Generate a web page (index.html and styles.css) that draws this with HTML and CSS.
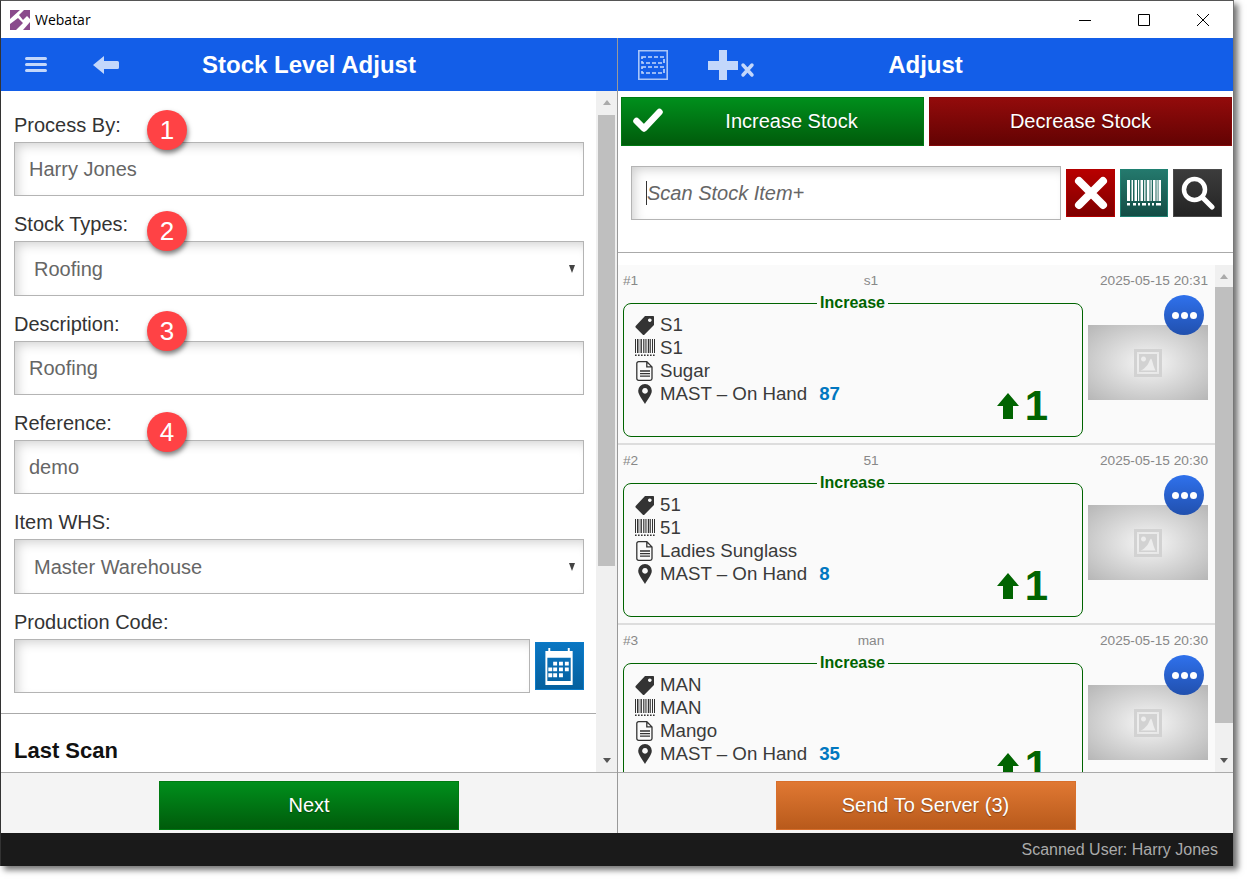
FILE: index.html
```html
<!DOCTYPE html>
<html lang="en">
<head>
<meta charset="utf-8">
<title>Webatar</title>
<link rel="stylesheet" href="styles.css">
</head>
<body>
<svg class="defs" aria-hidden="true">
  <symbol id="i-tag" viewBox="0 0 20 20"><path fill-rule="evenodd" d="M10 1h8.200a.8.8 0 0 1 .8.8V10L9.600 19.400a1.400 1.400 0 0 1-2 0L.9 12.700a1.400 1.400 0 0 1 0-2zM14.800 3.400a1.800 1.800 0 1 0 .01 0z"/></symbol>
  <symbol id="i-bars" viewBox="0 0 20 18"><path d="M0 0h1v14H0zM2 0h1v14H2zM3.500 0h.8v14h-.8zM5.500 0h1.400v14H5.500zM8 0h.8v14H8zM9.600 0h1v14h-1zM11.500 0h.7v14h-.7zM13 0h1.400v14H13zM15.200 0h.8v14h-.8zM17 0h1v14h-1zM19 0h1v14h-1zM0 15.600h1.600v1.400H0zM3 15.600h1.600v1.400H3zM6 15.600h1.600v1.400H6zM9 15.600h1.600v1.400H9zM12 15.600h1.600v1.400H12zM15 15.600h1.600v1.400H15zM18 15.600h1.600v1.400H18z"/></symbol>
  <symbol id="i-doc" viewBox="0 0 18 20"><path fill="none" stroke="currentColor" stroke-width="1.300" d="M2.600.7h8.200l5.200 5.200v11.600a1.800 1.800 0 0 1-1.800 1.800H2.600A1.800 1.800 0 0 1 .8 17.500V2.500A1.800 1.800 0 0 1 2.600.7zM10.800.7v5.200H16M4 10h10M4 12.600h10M4 15.200h10"/></symbol>
  <symbol id="i-pin" viewBox="0 0 14 20"><path fill-rule="evenodd" d="M7 0a6.800 6.800 0 0 1 6.800 6.800C13.800 11 9 16.500 7 20 5 16.500.2 11 .2 6.800A6.800 6.800 0 0 1 7 0zm0 4a2.900 2.900 0 1 0 .01 0z"/></symbol>
  <symbol id="i-up" viewBox="0 0 22 26"><path d="M11 0l11 13h-6v13H6V13H0z"/></symbol>
  <symbol id="i-photo" viewBox="0 0 28 28"><path fill-rule="evenodd" d="M0 0h28v28H0zM3 3v22h22V3zM5 5h18v18H5zm4.500 2.500a2.500 2.500 0 1 0 .01 0zM6.500 21.500c3-.5 4.500-3 6.500-5 1.500-1.500 2.500-5.500 4-7 1.500 1.500 2 7 4.500 12z"/></symbol>
</svg>

<div class="window">
  <div class="titlebar">
    <svg class="logo" viewBox="0 0 20 20" aria-hidden="true">
      <path fill="#8a4a8c" d="M0 0h10L0 9zM9 5l5-5h6v9l-3-3-4 4zM0 14l8-6 5 5-7 7H0zM20 12v8h-7z"/>
    </svg>
    <span class="app-name">Webatar</span>
    <div class="win-controls">
      <svg viewBox="0 0 59 37" class="win-btn" aria-hidden="true"><path d="M24 19.500h12" stroke="#000" fill="none"/></svg>
      <svg viewBox="0 0 59 37" class="win-btn" aria-hidden="true"><path d="M24.500 13.500h11v11h-11z" stroke="#000" fill="none"/></svg>
      <svg viewBox="0 0 59 37" class="win-btn" aria-hidden="true"><path d="M24 13l12 12M36 13L24 25" stroke="#000" fill="none"/></svg>
    </div>
  </div>

  <div class="panes">
    <section class="pane pane-left">
      <header class="appbar">
        <div class="appbar-icons icons-left">
          <svg class="ic-menu" viewBox="0 0 22 15" aria-hidden="true"><path d="M1.500 1.500h19M1.500 7.500h19M1.500 13.500h19" stroke="#c3d7fb" stroke-width="3" stroke-linecap="round"/></svg>
          <svg class="ic-back" viewBox="0 0 26 18" aria-hidden="true"><path fill="#c3d7fb" d="M0 9L11 0v5h13.500a1.500 1.500 0 0 1 1.500 1.500v5a1.500 1.500 0 0 1-1.500 1.500H11v5z"/></svg>
        </div>
        <h1 class="appbar-title">Stock Level Adjust</h1>
        <div></div>
      </header>
      <div class="scroll-wrap">
        <div class="form">
          <div class="field">
            <label class="label">Process By:</label>
            <div class="input">Harry Jones</div>
            <span class="badge">1</span>
          </div>
          <div class="field">
            <label class="label">Stock Types:</label>
            <div class="input select">Roofing<span class="caret-down"></span></div>
            <span class="badge badge-low">2</span>
          </div>
          <div class="field">
            <label class="label">Description:</label>
            <div class="input">Roofing</div>
            <span class="badge badge-low">3</span>
          </div>
          <div class="field">
            <label class="label">Reference:</label>
            <div class="input">demo</div>
            <span class="badge badge-lower">4</span>
          </div>
          <div class="field">
            <label class="label">Item WHS:</label>
            <div class="input select">Master Warehouse<span class="caret-down"></span></div>
          </div>
          <div class="field">
            <label class="label">Production Code:</label>
            <div class="input-row">
              <div class="input grow"></div>
              <button class="tool tool-blue" type="button" aria-label="Calendar">
                <svg class="ic-cal" viewBox="0 0 32 38" aria-hidden="true"><path fill="#fff" fill-rule="evenodd" d="M2 3h3V0h2v3h18V0h2v3h3v35H2zM4 10v24h24V10z" transform="translate(-1 0)"/><path fill="#fff" d="M9 14h4v4H9zM15 14h4v4h-4zM21 14h4v4h-4zM4 20h4v4H4zM9 20h4v4H9zM15 20h4v4h-4zM21 20h4v4h-4zM4 26h4v4H4zM9 26h4v4H9zM15 26h4v4h-4z"/></svg>
              </button>
            </div>
          </div>
          <hr class="rule">
          <h2 class="last-scan">Last Scan</h2>
        </div>
        <div class="scrollbar scrollbar-left">
          <span class="arrow arrow-up"></span>
          <span class="thumb thumb-left"></span>
          <span class="arrow arrow-down"></span>
        </div>
      </div>
      <footer class="footer">
        <button class="btn btn-green btn-wide" type="button">Next</button>
      </footer>
    </section>

    <section class="pane pane-right">
      <header class="appbar">
        <div class="appbar-icons icons-right">
          <svg class="ic-batch" viewBox="0 0 30 30" aria-hidden="true">
            <path fill="none" stroke="#c3d7fb" stroke-width="1.600" opacity=".85" d="M.8.8h28.400v28.400H.8z"/>
            <path fill="none" stroke="#c3d7fb" stroke-width="1.600" stroke-dasharray="4 2" d="M4 7h22v6H4zM4 17h22v6H4z"/>
          </svg>
          <svg class="ic-addx" viewBox="0 0 47 30" aria-hidden="true">
            <path fill="#c3d7fb" d="M11 0h8v11h11v9H19v10h-8V20H0v-9h11z"/>
            <path stroke="#c3d7fb" stroke-width="3.500" stroke-linecap="round" d="M35 15l9 10M44 15l-9 10"/>
          </svg>
        </div>
        <h1 class="appbar-title">Adjust</h1>
        <div></div>
      </header>

      <div class="actions">
        <button class="btn btn-green btn-action btn-check" type="button">
          <svg class="ic-check" viewBox="0 0 30 24" aria-hidden="true"><path fill="none" stroke="#fff" stroke-width="6.500" stroke-linecap="round" stroke-linejoin="round" d="M3.500 13l7.500 7.500L26.500 4"/></svg>
          Increase Stock
        </button>
        <button class="btn btn-red btn-action" type="button">Decrease Stock</button>
      </div>

      <div class="search">
        <div class="input grow scan"><span class="scan-text">Scan Stock Item+</span></div>
        <button class="tool tool-red" type="button" aria-label="Clear">
          <svg viewBox="0 0 34 34" class="ic-tool" aria-hidden="true"><path stroke="#fff" stroke-width="8" stroke-linecap="round" d="M5 5l24 24M29 5L5 29"/></svg>
        </button>
        <button class="tool tool-teal" type="button" aria-label="Scan barcode">
          <svg viewBox="0 0 34 26" class="ic-scan" aria-hidden="true"><path fill="#fff" d="M0 0h3v21H0zM4.500 0H6v21H4.500zM7.500 0H10v21H7.500zM11 0h1.200v21H11zM13.500 0H16v21h-2.500zM17.200 0h1.300v21h-1.300zM19.800 0h2.700v21h-2.700zM23.500 0h1.200v21h-1.200zM26 0h2.500v21H26zM29.500 0h1.200v21h-1.200zM31.500 0H34v21h-2.500zM0 23h3v2.500H0zM6 23h3v2.500H6zM11 23h2v2.500h-2zM15 23h4v2.500h-4zM21 23h2v2.500h-2zM25 23h2v2.500h-2zM29 23h5v2.500h-5z"/></svg>
        </button>
        <button class="tool tool-dark" type="button" aria-label="Search">
          <svg viewBox="0 0 34 34" class="ic-tool" aria-hidden="true"><circle cx="13.500" cy="13.500" r="10.500" fill="none" stroke="#fff" stroke-width="4.500"/><path stroke="#fff" stroke-width="5" stroke-linecap="round" d="M21.500 21.500L31 31"/></svg>
        </button>
      </div>

      <div class="list-wrap">
        <div class="list">
          <article class="row">
            <div class="meta"><span>#1</span><span class="meta-code">s1</span><span>2025-05-15 20:31</span></div>
            <div class="row-main">
              <fieldset class="card">
                <legend class="card-legend">Increase</legend>
                <div class="card-lines">
                  <div class="line"><svg class="ic-line"><use href="#i-tag"/></svg>S1</div>
                  <div class="line"><svg class="ic-line ic-thin"><use href="#i-bars"/></svg>S1</div>
                  <div class="line"><svg class="ic-line"><use href="#i-doc"/></svg>Sugar</div>
                  <div class="line"><svg class="ic-line"><use href="#i-pin"/></svg>MAST – On Hand<b class="onhand">87</b></div>
                </div>
                <div class="qty"><svg class="ic-up"><use href="#i-up"/></svg><b>1</b></div>
              </fieldset>
              <div class="thumb-col">
                <div class="photo"><svg class="ic-photo"><use href="#i-photo"/></svg></div>
                <button class="dots" type="button" aria-label="More"><i></i><i></i><i></i></button>
              </div>
            </div>
          </article>
          <article class="row">
            <div class="meta"><span>#2</span><span class="meta-code">51</span><span>2025-05-15 20:30</span></div>
            <div class="row-main">
              <fieldset class="card">
                <legend class="card-legend">Increase</legend>
                <div class="card-lines">
                  <div class="line"><svg class="ic-line"><use href="#i-tag"/></svg>51</div>
                  <div class="line"><svg class="ic-line ic-thin"><use href="#i-bars"/></svg>51</div>
                  <div class="line"><svg class="ic-line"><use href="#i-doc"/></svg>Ladies Sunglass</div>
                  <div class="line"><svg class="ic-line"><use href="#i-pin"/></svg>MAST – On Hand<b class="onhand">8</b></div>
                </div>
                <div class="qty"><svg class="ic-up"><use href="#i-up"/></svg><b>1</b></div>
              </fieldset>
              <div class="thumb-col">
                <div class="photo"><svg class="ic-photo"><use href="#i-photo"/></svg></div>
                <button class="dots" type="button" aria-label="More"><i></i><i></i><i></i></button>
              </div>
            </div>
          </article>
          <article class="row">
            <div class="meta"><span>#3</span><span class="meta-code">man</span><span>2025-05-15 20:30</span></div>
            <div class="row-main">
              <fieldset class="card">
                <legend class="card-legend">Increase</legend>
                <div class="card-lines">
                  <div class="line"><svg class="ic-line"><use href="#i-tag"/></svg>MAN</div>
                  <div class="line"><svg class="ic-line ic-thin"><use href="#i-bars"/></svg>MAN</div>
                  <div class="line"><svg class="ic-line"><use href="#i-doc"/></svg>Mango</div>
                  <div class="line"><svg class="ic-line"><use href="#i-pin"/></svg>MAST – On Hand<b class="onhand">35</b></div>
                </div>
                <div class="qty"><svg class="ic-up"><use href="#i-up"/></svg><b>1</b></div>
              </fieldset>
              <div class="thumb-col">
                <div class="photo"><svg class="ic-photo"><use href="#i-photo"/></svg></div>
                <button class="dots" type="button" aria-label="More"><i></i><i></i><i></i></button>
              </div>
            </div>
          </article>
        </div>
        <div class="scrollbar scrollbar-right">
          <span class="arrow arrow-up"></span>
          <span class="thumb thumb-right"></span>
          <span class="arrow arrow-down"></span>
        </div>
      </div>

      <footer class="footer">
        <button class="btn btn-orange btn-wide" type="button">Send To Server (3)</button>
      </footer>
    </section>
  </div>

  <div class="statusbar">Scanned User: Harry Jones</div>
</div>
</body>
</html>
```

FILE: styles.css
```css
* { box-sizing: border-box; }
html, body { margin: 0; padding: 0; height: 100%; background: #fff; overflow: hidden; }
body { font-family: "Liberation Sans", Arial, sans-serif; color: #333; }
.defs { display: none; }

.window {
  width: 1234px; height: 866px; display: flex; flex-direction: column;
  background: #fff; border-left: 1px solid #333; border-right: 1px solid #777;
  border-top: 1px solid #555;
  box-shadow: 4px 4px 6px rgba(0,0,0,.55);
}

.titlebar { height: 37px; flex: none; display: flex; align-items: center; padding-left: 9px; background: #fff; }
.logo { width: 20px; height: 20px; margin-right: 5px; }
.app-name { font: 14px "Open Sans", sans-serif; color: #000; }
.win-controls { margin-left: auto; margin-right: 1px; display: flex; }
.win-btn { width: 59px; height: 37px; display: block; }

.panes { flex: 1; display: flex; min-height: 0; }
.pane { display: flex; flex-direction: column; min-width: 0; }
.pane-left { width: 617px; border-right: 1px solid #999; flex: none; }
.pane-right { flex: 1; }

.appbar {
  height: 53px; flex: none; background: #135ee8; color: #fff;
  display: grid; grid-template-columns: 1fr auto 1fr; align-items: center;
}
.appbar-title { margin: 0; font-size: 24px; font-weight: 700; }
.appbar-icons { display: flex; align-items: center; }
.icons-left { padding-left: 24px; gap: 46px; }
.icons-right { padding-left: 20px; gap: 40px; }
.ic-menu { width: 22px; height: 15px; }
.ic-back { width: 26px; height: 18px; }
.ic-batch { width: 30px; height: 30px; }
.ic-addx { width: 47px; height: 30px; }

/* left form */
.scroll-wrap { flex: 1; display: flex; min-height: 0; }
.form { flex: 1; min-width: 0; padding-top: 17px; overflow: hidden; }
.field { position: relative; padding: 0 12px 11px 13px; }
.label { display: block; font-size: 20px; line-height: 34px; color: #333; }
.input {
  height: 54px; display: flex; align-items: center; padding-left: 14px;
  font-size: 20px; color: #666; background: #fff;
  border: 1px solid #b4b4b4;
  box-shadow: inset 5px 5px 12px -3px rgba(0,0,0,.2);
}
.select { height: 55px; padding: 1px 8px 0 19px; justify-content: space-between; }
.caret-down { width: 0; height: 0; border: 3.500px solid transparent; border-top: 8px solid #444; border-bottom: 0; }
.input-row { display: flex; align-items: center; gap: 5px; }
.grow { flex: 1; min-width: 0; }
.badge {
  position: absolute; left: 146px; top: 2px; width: 40px; height: 40px; border-radius: 50%;
  background: #ff4245; color: #fff; font-size: 26px; line-height: 40px; text-align: center;
  box-shadow: 1px 3px 5px rgba(0,0,0,.5);
}
.badge-low { top: 4px; }
.badge-lower { top: 6px; }
.rule { height: 1px; margin: 9px 0 0; border: 0; background: #aaa; }
.last-scan { margin: 24px 0 0 13px; font-size: 22px; line-height: 26px; font-weight: 700; color: #111; }

.tool {
  width: 49px; height: 48px; flex: none; padding: 0; display: flex; align-items: center; justify-content: center;
  border: 1px solid; cursor: pointer;
}
.tool-blue { background: linear-gradient(#0a76c2, #05609e); border-color: #0a7ac8; }
.tool-red { background: linear-gradient(#b80000, #7e0000); border-color: #b30000; }
.tool-teal { width: 48px; background: linear-gradient(#24796d, #134d45); border-color: #1f8071; }
.tool-dark { background: linear-gradient(#3c3c3c, #242424); border-color: #4a4a4a; }
.ic-cal { width: 32px; height: 37px; }
.ic-tool { width: 34px; height: 34px; }
.ic-scan { width: 34px; height: 26px; }

/* scrollbars */
.scrollbar { flex: none; background: #f0f0f0; display: flex; flex-direction: column; align-items: center; }
.scrollbar-left { width: 21px; }
.scrollbar-right { width: 18px; }
.thumb { background: #bfbfbf; width: 100%; display: block; flex: none; }
.thumb-left { width: 17px; height: 451px; margin-top: 10px; }
.thumb-right { height: 436px; margin-top: 8px; }
.arrow { flex: none; width: 0; height: 0; border: 4.500px solid transparent; }
.arrow-up { border-top: 0; border-bottom: 5px solid #aaa; margin-top: 9px; }
.arrow-down { border-bottom: 0; border-top: 5px solid #555; margin-top: auto; margin-bottom: 9px; }

/* buttons */
.btn {
  font-family: inherit; font-size: 20px; color: #fff; border: 1px solid; padding: 0; cursor: pointer;
  text-shadow: 0 1px 1px rgba(0,0,0,.35);
}
.btn-green { background: linear-gradient(#008f1c, #005b0b); border-color: #007a12; }
.btn-red { background: linear-gradient(#930b0b, #630303); border-color: #850808; }
.btn-orange { background: linear-gradient(#e07833, #b85a1b); border-color: #d86f2c; }
.btn-wide { width: 300px; height: 49px; }
.btn-action { min-width: 0; height: 49px; position: relative; }
.btn-check { padding-left: 38px; }
.ic-check { position: absolute; left: 11px; top: 10px; width: 30px; height: 24px; }

.footer {
  height: 61px; flex: none; background: #f4f4f4; border-top: 1px solid #aaa;
  display: flex; justify-content: center; padding-top: 8px;
}

/* right */
.actions { flex: none; display: grid; grid-template-columns: 1fr 1fr; gap: 5px; padding: 6px 1px 0 3px; }
.search {
  flex: none; display: flex; align-items: center; gap: 5px;
  padding: 20px 11px 32px 13px; border-bottom: 1px solid #aaa;
}
.scan { padding-left: 14px; }
.scan-text { border-left: 1px solid #333; font-style: italic; color: #666; line-height: 24px; }

.list-wrap { flex: 1; display: flex; min-height: 0; margin-top: 12px; }
.list { flex: 1; min-width: 0; overflow: hidden; background: #fafafa; }
.row { height: 180px; padding: 0 7px 0 5px; border-bottom: 2px solid #ddd; }
.meta { height: 30px; display: flex; justify-content: space-between; align-items: center; font-size: 13.700px; color: #888; position: relative; }
.meta-code { position: absolute; left: 0; right: 89px; text-align: center; }
.row-main { display: flex; gap: 5px; align-items: flex-start; }
.card {
  margin: 0; width: 460px; height: 142px; padding: 2px 12px 0 11px; min-width: 0;
  border: 1px solid #006400; border-radius: 8px; display: block; position: relative;
}
.card-legend { margin: 0 auto; padding: 0 3px; font-size: 16px; font-weight: 700; color: #006400; line-height: 16px; }
.line { height: 23px; line-height: 23px; font-size: 18.700px; color: #3a3a3a; display: flex; align-items: center; white-space: nowrap; }
.ic-line { width: 20px; height: 20px; margin-right: 5px; fill: #333; color: #333; flex: none; }
.ic-thin { height: 18px; }
.onhand { margin-left: 12px; color: #0077c0; }
.qty { position: absolute; right: 34px; bottom: 8px; display: flex; align-items: center; gap: 6px; color: #006400; }
.qty b { font-size: 42px; line-height: 44px; }
.ic-up { width: 22px; height: 26px; fill: #006400; }

.thumb-col { position: relative; width: 120px; padding-top: 30px; flex: none; }
.photo {
  height: 75px; display: flex; align-items: center; justify-content: center;
  background: radial-gradient(ellipse at center, #ededed 15%, #b6b6b6 100%);
}
.ic-photo { width: 28px; height: 28px; fill: #d2d2d2; }
.dots {
  position: absolute; right: 4px; top: 0; width: 40px; height: 40px; border-radius: 50%; border: 0; padding: 0;
  background: linear-gradient(#2f71ec, #2150ae); display: flex; align-items: center; justify-content: center; gap: 2px;
}
.dots i { width: 7px; height: 7px; border-radius: 50%; background: #fff; display: block; }

.statusbar {
  height: 33px; flex: none; background: #1a1a1a; color: #aaa; font-size: 16px;
  display: flex; align-items: center; justify-content: flex-end; padding-right: 15px;
}
```
